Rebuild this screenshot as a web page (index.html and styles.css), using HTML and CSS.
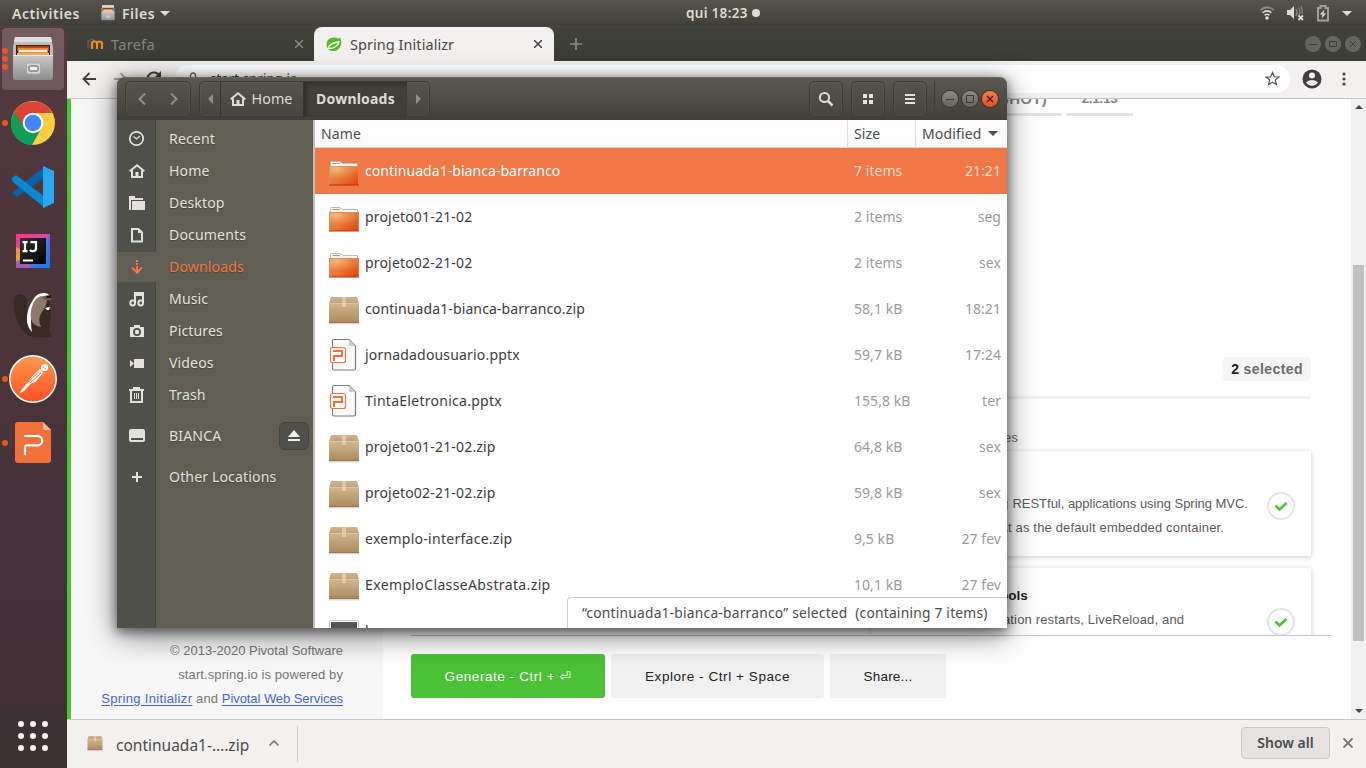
FILE: index.html
```html
<!DOCTYPE html>
<html lang="pt">
<head>
<meta charset="utf-8">
<title>Desktop</title>
<link rel="stylesheet" href="styles.css">
</head>
<body>
<svg class="defs" width="0" height="0">
  <defs>
    <linearGradient id="gFolder" x1="0" y1="0" x2="1" y2="1"><stop offset="0" stop-color="#e59a4e"/><stop offset=".5" stop-color="#e8793a"/><stop offset="1" stop-color="#e2400a"/></linearGradient>
    <radialGradient id="gGlow" cx=".25" cy=".2" r=".7"><stop offset="0" stop-color="#f8d095" stop-opacity=".7"/><stop offset="1" stop-color="#f0a060" stop-opacity="0"/></radialGradient>
    <linearGradient id="gBox" x1="0" y1="0" x2="0" y2="1"><stop offset="0" stop-color="#d2b58d"/><stop offset="1" stop-color="#a98a5e"/></linearGradient>
    <linearGradient id="gBoxTop" x1="0" y1="0" x2="0" y2="1"><stop offset="0" stop-color="#cfb48f"/><stop offset="1" stop-color="#c19f74"/></linearGradient>
    <linearGradient id="gMetal" x1="0" y1="0" x2="0" y2="1"><stop offset="0" stop-color="#c9c9c9"/><stop offset="1" stop-color="#8d8d8d"/></linearGradient>
    <linearGradient id="gPost" x1="0" y1="0" x2="0" y2="1"><stop offset="0" stop-color="#ff9a4d"/><stop offset="1" stop-color="#ff4f22"/></linearGradient>
    <linearGradient id="gIJ" x1="0" y1="0" x2="1" y2="1"><stop offset="0" stop-color="#ff318c"/><stop offset=".45" stop-color="#e0479a"/><stop offset=".55" stop-color="#5b6fe0"/><stop offset="1" stop-color="#087cfa"/></linearGradient>
    <linearGradient id="gBlk" x1="0" y1="0" x2="1" y2="1"><stop offset="0" stop-color="#333"/><stop offset="1" stop-color="#000"/></linearGradient>
    <symbol id="folder" viewBox="0 0 32 26">
      <path d="M2.500 7V1.500q0-1 1-1H12l2.500 2h15v4.500z" fill="#f6f6f6" stroke="#bcbcbc"/>
      <path d="M4.500 2.500h7.500" stroke="#ee8a58"/>
      <path d="M1 5h30v19H1z" fill="url(#gFolder)"/>
      <path d="M1 5h30v8Q16 17 1 20z" fill="url(#gGlow)"/>
      <path d="M1.500 24V5.500h29V24" fill="none" stroke="#d98d68" stroke-opacity=".7"/>
      <path d="M1 24h30" stroke="#b9300c"/>
    </symbol>
    <symbol id="box" viewBox="0 0 32 28">
      <path d="M1 26h30v1.500H1z" fill="#000" opacity=".12"/>
      <path d="M4 0h24q1 0 1.500 1.200L31 7H1l1.500-5.800Q3 0 4 0z" fill="url(#gBoxTop)"/>
      <path d="M1 6.500h30V25q0 1-1 1H2q-1 0-1-1z" fill="url(#gBox)"/>
      <path d="M1 6.500h30" stroke="#dcc6a5"/><path d="M1 25.600h30" stroke="#90714a" stroke-width=".8"/>
      <path d="M14 .5h4V10h-4z" fill="#e2cfb2" opacity=".8"/>
    </symbol>
    <symbol id="pptx" viewBox="0 0 28 34">
      <path d="M3.500 3q0-1.500 1.500-1.500h15L26.500 8v22.500q0 1.500-1.500 1.500H5q-1.500 0-1.500-1.500z" fill="#fbfbfb" stroke="#7d7d7d" stroke-width="1.200"/>
      <path d="M20 1.500V7q0 1 1 1h5.500z" fill="#ccc"/>
      <rect x="1.500" y="9.500" width="15" height="15" rx="2" fill="#fff" stroke="#f27441" stroke-width="1.200"/>
      <path d="M4 13h9v5H5v5" fill="none" stroke="#f0703c" stroke-width="2"/>
    </symbol>
    <symbol id="house" viewBox="0 0 16 16"><path d="M.7 8.300L8 2.300l7.300 6M3 7.500V14h10V7.500" fill="none" stroke="currentColor" stroke-width="2"/><path d="M6.500 9h3v5h-3z" fill="currentColor"/></symbol>
    <symbol id="cabinet" viewBox="0 0 44 46">
      <path d="M4 1h36l2 10v31H2V11z" fill="#bdbdbd"/><path d="M4 1h36l1 5H3z" fill="#dedede"/>
      <path d="M5 9h34v11H5z" fill="#352018"/><path d="M6 10h32v5H6z" fill="#b94612"/><path d="M7 12h30v6H7z" fill="#f58a3a"/><path d="M8 14h28v2H8z" fill="#fff3df"/><path d="M6 17h32v3H6z" fill="#e0b070"/>
      <path d="M2 19h40v23q0 2-2 2H4q-2 0-2-2z" fill="url(#gMetal)"/><path d="M2 19.500h40" stroke="#e6e6e6"/>
      <rect x="15.500" y="27" width="14" height="11" rx="2" fill="#d8d8d8" stroke="#a9a9a9"/><rect x="18" y="30" width="9" height="5" rx="1" fill="#eee" stroke="#555"/>
    </symbol>
  </defs>
</svg>

<header class="topbar">
  <span class="activities">Activities</span>
  <svg class="tb-files" width="14" height="16" viewBox="0 0 44 46" preserveAspectRatio="none"><use href="#cabinet"/></svg>
  <span class="appname">Files</span>
  <i class="tri-down tb-tri"></i>
  <div class="clock">qui 18:23 <i></i></div>
  <div class="tray">
    <svg width="14" height="14" viewBox="0 0 14 14" fill="none" stroke="#dfdbd2"><path d="M.5 4Q7-1.500 13.500 4" stroke="#8b8982" stroke-width="1.700"/><path d="M2.500 6.800Q7 3 11.500 6.800M4.600 9.300Q7 7.400 9.400 9.300" stroke-width="1.500"/><circle cx="7" cy="12" r="1.800" fill="#dfdbd2" stroke="none"/></svg>
    <svg width="17" height="16" viewBox="0 0 17 16"><path d="M0 5h3l4-4v13l-4-4H0z" fill="#dfdbd2"/><path d="M9 4q2 3.500 0 7M11.500 2.500q3 5 0 8M14 1q2 4 1 8" fill="none" stroke="#85837c" stroke-width="1.300"/><path d="M11.500 10.500l4.500 4.500m0-4.500L11.500 15" stroke="#dfdbd2" stroke-width="1.800"/></svg>
    <svg width="12" height="17" viewBox="0 0 12 17"><path d="M1 3h2.500V1h5v2H11v12.500H1z" fill="none" stroke="#a19f98" stroke-width="2"/><path d="M7.500 4.500L2.800 9.500h2.700l-1 4 4.700-5H6.500z" fill="#dfdbd2"/></svg>
    <i class="tri-down"></i>
  </div>
</header>

<div class="workspace">
  <nav class="dock">
    <div class="slot active"><div class="dots"><b></b><b></b><b></b></div><svg width="44" height="46"><use href="#cabinet"/></svg></div>
    <div class="slot"><div class="dots"><b></b></div>
      <svg width="46" height="46" viewBox="0 0 46 46"><circle cx="23" cy="23" r="22" fill="#ffcd40"/><path d="M4 12a22 22 0 0 0 18 33l9-16-8-6z" fill="#0f9d58"/><path d="M4 12A22 22 0 0 1 42.200 13H23l-8.500 15z" fill="#db4437"/><path d="M4 12l9 16 4 4 6 1-2 12A22 22 0 0 1 4 12z" fill="#0f9d58"/><circle cx="23" cy="23" r="10.200" fill="#fff"/><circle cx="23" cy="23" r="8.300" fill="#4285f4"/></svg></div>
    <div class="slot">
      <svg width="44" height="44" viewBox="0 0 44 44"><path d="M1 28l5 4L34 12V1z" fill="#0065a9"/><path d="M1 16v-3l4-3 29 22v11L2 17z" fill="#0788d0"/><path d="M32 1l11 5v32l-11 5V1z" fill="#29a8f0"/></svg></div>
    <div class="slot">
      <svg width="34" height="34" viewBox="0 0 34 34"><path d="M0 0h34v34H0z" fill="url(#gIJ)"/><path d="M0 13l4 2v15l-4-3z" fill="#f29a3a"/><path d="M0 27l6-1 8 4v4H0z" fill="#a45cb5"/><path d="M4 4h26v26H4z" fill="url(#gBlk)"/><path d="M6.500 8.200h5M9 8v9M6.500 17.200h5M14.500 8.200h5.500v6q0 3-3 3-2 0-3-1.400" fill="none" stroke="#fff" stroke-width="2.200"/><path d="M7 25.500h10v2H7z" fill="#fff"/></svg></div>
    <div class="slot">
      <svg width="40" height="48" viewBox="0 0 40 48"><path d="M1 9Q2 3 8 3q6 1 6 8-1 8 1 14l5-13q3-8 9-10 6-1 8 3 2 4-1 8 3 10 1 18l-.5 10q2 2 2 4.500-7 1.500-14 1Q11 46 5 31-1 18 1 9z" fill="#382923"/><path d="M20 9q4-8 12-7 3 0 5 3l-4 1-6 2q-6 5-8 13-2 9 0 20-6-6-5-16 1-9 6-16z" fill="#fff"/><path d="M20 13q3-7 8-8l6 4q-1 7-5 12-5 7-1 15-9-1-10-9-1-7 2-14z" fill="#8e7868"/><path d="M29 5.500q6-2 9 0v4q-5 0-9-2z" fill="#6e5a4e"/><path d="M33 5l5-1v3h-4z" fill="#1d1512"/><path d="M32 17l5-1-1 3h-2z" fill="#fff"/></svg></div>
    <div class="slot"><div class="dots"><b></b></div>
      <svg width="48" height="48" viewBox="0 0 48 48"><circle cx="24" cy="24" r="23.200" fill="url(#gPost)" stroke="#fff" stroke-width="1.500"/><circle cx="35.500" cy="12.500" r="3.600" fill="#fff"/><path d="M31 14l3.500 3.500-8 9.500-9 3 5-8z" fill="#fff"/><path d="M18.500 28L11 37.500l3-1L23 27z" fill="#fff" stroke="#fff"/><path d="M18 28.500l12-12M21 28l11-10M34 12l3 2" stroke="#ff7438" stroke-width="1"/></svg></div>
    <div class="slot"><div class="dots"><b></b></div>
      <svg width="36" height="42" viewBox="0 0 36 42"><path d="M3 0h25l8 8v30q0 3-3 3H3q-3 0-3-3V3q0-3 3-3z" fill="#f2713b"/><path d="M28 0v6q0 2 2 2h6z" fill="#f9b597"/><path d="M9 14h13.500a4.700 4.700 0 0 1 0 9.400H12q-2 0-2 2V33" fill="none" stroke="#fff" stroke-width="2.200"/></svg></div>
    <svg class="apps" width="32" height="32" viewBox="0 0 32 32" fill="#f2f1f0"><circle cx="4" cy="4" r="3"/><circle cx="16" cy="4" r="3"/><circle cx="28" cy="4" r="3"/><circle cx="4" cy="16" r="3"/><circle cx="16" cy="16" r="3"/><circle cx="28" cy="16" r="3"/><circle cx="4" cy="28" r="3"/><circle cx="16" cy="28" r="3"/><circle cx="28" cy="28" r="3"/></svg>
  </nav>

  <section class="browser">
    <div class="tabs">
      <div class="tab idle">
        <svg width="16" height="12" viewBox="0 0 16 12" fill="none"><path d="M0 4l5-3 2 2M1 5v5" stroke="#6a5a4a" stroke-width="1.500"/><path d="M5 11V5.500q0-2 2.500-2t2.500 2V11M10 5.500q0-2 2.500-2t2.500 2V11" stroke="#f28a13" stroke-width="2.200"/></svg>
        <span>Tarefa</span>
        <svg class="x" width="8" height="8" viewBox="0 0 8 8"><path d="M0 0l8 8M8 0L0 8" stroke="#8d8d88" stroke-width="1.400"/></svg>
      </div>
      <div class="tab current">
        <svg width="16" height="16" viewBox="0 0 16 16"><path d="M14 1q2 5 .5 9-2 5-7 5-6 0-7-6Q.500 2 7 1.500q4 0 5.500 1.200Q13.500 2 14 1z" fill="#55bd28"/><path d="M2 12q4 1 7-1 3.500-2 4-6M2.500 11Q5 7 12 6" stroke="#fff" stroke-width="1.300" fill="none"/></svg>
        <span>Spring Initializr</span>
        <svg class="x" width="8" height="8" viewBox="0 0 8 8"><path d="M0 0l8 8M8 0L0 8" stroke="#45433f" stroke-width="1.500"/></svg>
      </div>
      <svg class="plus" width="12" height="12" viewBox="0 0 12 12"><path d="M6 0v12M0 6h12" stroke="#8a8a84" stroke-width="1.700"/></svg>
      <div class="wctl dim"><i>
        <svg width="16" height="16"><path d="M4 8.500h8" stroke="#3c3d38"/></svg></i><i>
        <svg width="16" height="16"><path d="M4.500 5.500h7v5h-7z" fill="none" stroke="#3c3d38"/></svg></i><i>
        <svg width="16" height="16"><path d="M5 5l6 6m0-6l-6 6" stroke="#3c3d38"/></svg></i></div>
    </div>
    <div class="toolbar">
      <svg width="14" height="14" viewBox="0 0 14 14" fill="none" stroke="#403f3d" stroke-width="1.800"><path d="M14 7H1.500M7.500 1l-6 6 6 6"/></svg>
      <svg width="14" height="14" viewBox="0 0 14 14" fill="none" stroke="#aaa8a6" stroke-width="1.800"><path d="M0 7h12.500M6.500 1l6 6-6 6"/></svg>
      <svg width="16" height="16" viewBox="0 0 16 16" fill="none" stroke="#403f3d" stroke-width="2"><path d="M13.500 5A6.300 6.300 0 1 0 14 9"/><path d="M15 0v6.500H8.500z" fill="#403f3d" stroke="none"/></svg>
      <div class="url">
        <svg width="10" height="13" viewBox="0 0 10 13"><path d="M2.500 6V3.500a2.500 2.500 0 0 1 5 0V6" fill="none" stroke="#666" stroke-width="1.400"/><path d="M1 5.500h8v7H1z" fill="#666"/></svg>
        <span>start.spring.io</span>
        <svg class="star" width="15" height="15" viewBox="0 0 24 24"><path d="M12 2.500l2.800 6.700 7.200.6-5.500 4.700 1.700 7-6.200-3.700-6.200 3.700 1.700-7L2 9.800l7.200-.6z" fill="none" stroke="#555" stroke-width="2"/></svg>
      </div>
      <svg class="user" width="20" height="20" viewBox="0 0 20 20"><circle cx="10" cy="10" r="9.500" fill="#403f3f"/><circle cx="10" cy="6.500" r="3" fill="#f2f1f0"/><path d="M4 13.500q2-2.500 6-2.500t6 2.500q-2.500 3.300-6 3.300t-6-3.300z" fill="#f2f1f0"/></svg>
      <svg class="kebab" width="4" height="14" viewBox="0 0 4 14" fill="#444"><circle cx="2" cy="2" r="1.600"/><circle cx="2" cy="7" r="1.600"/><circle cx="2" cy="12" r="1.600"/></svg>
    </div>

    <div class="page">
      <aside class="left">
        <p>© 2013-2020 Pivotal Software<br><span class="pw">start.spring.io is powered by</span><br><span class="lk"><a class="l1">Spring Initializr</a> and <a class="l2">Pivotal Web Services</a></span></p>
      </aside>
      <main class="main">
        <div class="scrollarea">
          <div class="versions"><span class="v1">2.1.14 (SNAPSHOT)</span><span class="v2">2.1.13</span></div>
          <div class="selhead"><span class="pill"><b>2</b> selected</span></div>
          <div class="results">
            <div class="label">Selected dependencies</div>
            <article class="dep one"><div><p class="a"><span class="lead">Build web, including </span>RESTful, applications using Spring MVC.</p><p>Uses Apache Tomcat as the default embedded container.</p></div>
              <svg width="28" height="28" viewBox="0 0 28 28"><circle cx="14" cy="14" r="13" fill="#fff" stroke="#e5e5e5" stroke-width="2"/><path d="M8.500 13.500l4 4 7-6.500" fill="none" stroke="#4cc22f" stroke-width="2.600"/></svg></article>
            <article class="dep two"><div><h4>Spring Boot DevTools</h4><p>Provides fast application restarts, LiveReload, and</p></div>
              <svg width="28" height="28" viewBox="0 0 28 28"><circle cx="14" cy="14" r="13" fill="#fff" stroke="#e5e5e5" stroke-width="2"/><path d="M8.500 13.500l4 4 7-6.500" fill="none" stroke="#4cc22f" stroke-width="2.600"/></svg></article>
          </div>
        </div>
        <div class="actions"><button class="go">Generate - Ctrl + <span class="ret">⏎</span></button><button class="ex">Explore - Ctrl + Space</button><button class="sh">Share...</button></div>
      </main>
      <div class="scroll"><i class="up"></i><i class="thumb"></i><i class="down"></i></div>
    </div>

    <footer class="downloads">
      <svg width="16" height="15" viewBox="0 0 32 28" preserveAspectRatio="none"><use href="#box"/></svg>
      <span class="fname">continuada1-….zip</span>
      <svg class="chev" width="10" height="6" viewBox="0 0 10 6"><path d="M.5 5.500L5 1l4.500 4.500" fill="none" stroke="#777" stroke-width="1.600"/></svg>
      <i class="sep"></i>
      <button class="showall">Show all</button>
      <svg class="close" width="10" height="10" viewBox="0 0 10 10"><path d="M.5.5l9 9m0-9l-9 9" stroke="#737373" stroke-width="1.900"/></svg>
    </footer>
  </section>
</div>

<section class="files">
  <header class="fhead">
    <div class="nav"><svg width="8" height="12" viewBox="0 0 8 12"><path d="M7 .5L1.500 6 7 11.500"/></svg><svg width="8" height="12" viewBox="0 0 8 12"><path d="M1 .5L6.500 6 1 11.500"/></svg></div>
    <div class="path"><span class="pl"><i class="tl"></i></span><span class="ph"><svg width="16" height="16"><use href="#house"/></svg>Home</span><span class="pd">Downloads</span><span class="pr"><i class="tr"></i></span></div>
    <div class="fbtns">
      <span><svg width="16" height="16" viewBox="0 0 16 16"><circle cx="6.500" cy="6.500" r="4.600" fill="none" stroke="#dfdbd2" stroke-width="2"/><path d="M10 10l4.500 4.500" stroke="#dfdbd2" stroke-width="2.500"/></svg></span>
      <span><svg width="10" height="10" viewBox="0 0 10 10" fill="#e6e2d9"><path d="M0 0h4v4H0zM6 0h4v4H6zM0 6h4v4H0zM6 6h4v4H6z"/></svg></span>
      <span><svg width="10" height="10" viewBox="0 0 10 10" fill="#e6e2d9"><path d="M0 0h10v2H0zM0 4h10v2H0zM0 8h10v2H0z"/></svg></span>
    </div>
    <div class="wctl"><i><svg width="16" height="16"><path d="M4 8.500h8" stroke="#3a3934"/></svg></i><i><svg width="16" height="16"><path d="M4.500 4.500h7v7h-7z" fill="none" stroke="#3a3934"/></svg></i><i class="red"><svg width="16" height="16"><path d="M5 5l6 6m0-6l-6 6" stroke="#46180a" stroke-width="1.300"/></svg></i></div>
  </header>
  <div class="fbody">
    <ul class="side">
      <li><svg viewBox="0 0 16 16" width="16" height="16"><circle cx="7.500" cy="7.500" r="6.700" fill="none" stroke="currentColor" stroke-width="1.700"/><path d="M4.500 5.500l3 2.500L11 5" fill="none" stroke="currentColor" stroke-width="1.300"/></svg><span>Recent</span></li>
      <li><svg width="16" height="16"><use href="#house"/></svg><span>Home</span></li>
      <li><svg viewBox="0 0 16 16" width="16" height="16" fill="currentColor"><path d="M0 1h6v2h8v2H2v10H0z"/><path d="M3 6h13v9H3z"/></svg><span>Desktop</span></li>
      <li><svg viewBox="0 0 16 16" width="16" height="16"><path d="M3 2h6.500L13 5.500V14.500H3z" fill="none" stroke="currentColor" stroke-width="2"/><path d="M9 2v4h4" fill="currentColor"/></svg><span>Documents</span></li>
      <li class="cur"><svg viewBox="0 0 16 16" width="16" height="16"><path d="M7 1h2v2H7zM7 4h2v2H7zM7 7h2v5H7z" fill="currentColor"/><path d="M3 8.500l5 5 5-5" fill="none" stroke="currentColor" stroke-width="2"/></svg><span>Downloads</span></li>
      <li><svg viewBox="0 0 16 16" width="16" height="16" fill="none" stroke="currentColor" stroke-width="2"><path d="M6 12V2h8v10M6 4h8"/><circle cx="3.700" cy="12" r="2.400"/><circle cx="11.700" cy="12" r="2.400"/></svg><span>Music</span></li>
      <li><svg viewBox="0 0 16 16" width="16" height="16"><path fill-rule="evenodd" fill="currentColor" d="M5 2h6v2h4v10H1V4h4zM8 5a4 4 0 1 0 0 8 4 4 0 0 0 0-8z"/><circle cx="8" cy="9" r="2.200" fill="currentColor"/></svg><span>Pictures</span></li>
      <li><svg viewBox="0 0 16 16" width="16" height="16" fill="currentColor"><path d="M5 4h10v9H5zM1 5l4 3.500L1 12z"/></svg><span>Videos</span></li>
      <li><svg viewBox="0 0 16 16" width="16" height="16" fill="none" stroke="currentColor" stroke-width="2"><path d="M0 3h15M2 4v11h11V4"/><path d="M4 1h7"/><path d="M5.500 6v6M7.500 6v6M9.500 6v6" stroke-width="1"/></svg><span>Trash</span></li>
      <li class="gap"><svg viewBox="0 0 16 16" width="16" height="16"><path fill-rule="evenodd" fill="currentColor" d="M2 1h12q2 0 2 2v9q0 2-2 2H2q-2 0-2-2V3q0-2 2-2zM2 10v2h12v-2z"/></svg><span>BIANCA</span><em class="eject"><svg width="12" height="12" viewBox="0 0 12 12" fill="#eee"><path d="M6 0l6 7H0zM0 9h12v2H0z"/></svg></em></li>
      <li class="gap"><svg viewBox="0 0 16 16" width="16" height="16"><path d="M8 3v10M3 8h10" stroke="currentColor" stroke-width="2"/></svg><span>Other Locations</span></li>
    </ul>
    <div class="list">
      <div class="cols"><span>Name</span><span>Size</span><span>Modified <i class="tri-down"></i></span></div>
      <div class="row sel"><svg width="32" height="26"><use href="#folder"/></svg><span>continuada1-bianca-barranco</span><span>7 items</span><span>21:21</span></div>
      <div class="row"><svg width="32" height="26"><use href="#folder"/></svg><span class="w1">projeto01-21-02</span><span>2 items</span><span>seg</span></div>
      <div class="row"><svg width="32" height="26"><use href="#folder"/></svg><span class="w1">projeto02-21-02</span><span>2 items</span><span>sex</span></div>
      <div class="row"><svg width="32" height="28"><use href="#box"/></svg><span class="w0">continuada1-bianca-barranco.zip</span><span>58,1 kB</span><span>18:21</span></div>
      <div class="row p"><svg width="28" height="34"><use href="#pptx"/></svg><span class="w1">jornadadousuario.pptx</span><span>59,7 kB</span><span>17:24</span></div>
      <div class="row p"><svg width="28" height="34"><use href="#pptx"/></svg><span class="w2">TintaEletronica.pptx</span><span>155,8 kB</span><span>ter</span></div>
      <div class="row"><svg width="32" height="28"><use href="#box"/></svg><span class="w1">projeto01-21-02.zip</span><span>64,8 kB</span><span>sex</span></div>
      <div class="row"><svg width="32" height="28"><use href="#box"/></svg><span class="w1">projeto02-21-02.zip</span><span>59,8 kB</span><span>sex</span></div>
      <div class="row"><svg width="32" height="28"><use href="#box"/></svg><span class="w2">exemplo-interface.zip</span><span>9,5 kB</span><span>27 fev</span></div>
      <div class="row"><svg width="32" height="28"><use href="#box"/></svg><span class="w3">ExemploClasseAbstrata.zip</span><span>10,1 kB</span><span>27 fev</span></div>
      <div class="row last"><svg width="32" height="24" viewBox="0 0 32 24"><path d="M1.500.5h29v23h-29z" fill="#fff" stroke="#ccc"/><path d="M3 2h26v21H3z" fill="#555"/></svg><span>h</span></div>
      <div class="status">“continuada1-bianca-barranco” selected&nbsp; (containing 7 items)</div>
    </div>
  </div>
</section>
</body>
</html>
```
FILE: styles.css
```css
* { box-sizing: border-box; }
body { margin: 0; width: 1366px; height: 768px; overflow: hidden; position: relative; display: flex; flex-direction: column; font: 14px "Noto Sans", sans-serif; letter-spacing: .05px; }
.defs { position: absolute; }
svg { display: block; flex: none; }
ul, p, h4 { margin: 0; padding: 0; list-style: none; }
button { border: 0; margin: 0; padding: 0; }
.tri-down { border: 5px solid transparent; border-top-color: #dfdbd2; border-bottom: 0; display: block; }

.topbar { height: 27px; flex: none; display: flex; align-items: center; position: relative; background: linear-gradient(#57544b, #403f3a); color: #dfdbd2; font-weight: 600; font-size: 14px; border-bottom: 1px solid #494740; }
.activities { width: 89px; padding-left: 12px; letter-spacing: .55px; }
.tb-files { margin-left: 12px; }
.appname { margin-left: 7px; width: 33px; letter-spacing: .5px; }
.tb-tri { margin-left: 5px; }
.clock { position: absolute; left: 686px; font-size: 13.5px; display: flex; align-items: center; gap: 4px; white-space: nowrap; letter-spacing: .3px; }
.clock i { width: 8px; height: 8px; border-radius: 50%; background: #dfdbd2; }
.tray { margin-left: auto; padding-right: 14px; display: flex; align-items: center; gap: 13px; }

.workspace { display: flex; flex: 1; min-height: 0; }
.dock { width: 67px; background: linear-gradient(#533a3f, #4b353a 35%, #44313a 75%, #3c3133); display: flex; flex-direction: column; position: relative; flex: none; }
.slot { height: 64px; display: flex; align-items: center; justify-content: center; position: relative; flex: none; padding-right: 1px; }
.slot.active { background: linear-gradient(#745b5f, #6e565b); height: 62px; margin: 1px 3px 1px 2px; border-radius: 4px; padding-right: 0; }
.dots { position: absolute; left: 2px; top: 0; bottom: 0; display: flex; flex-direction: column; justify-content: center; gap: 2px; }
.active .dots { left: 0; }
.dots b { width: 6px; height: 6px; border-radius: 50%; background: #e95420; }
.apps { margin: auto 0 16px 17px; }

.browser { flex: 1; display: flex; flex-direction: column; min-width: 0; }
.tabs { height: 34px; background: linear-gradient(#41423c, #3b3c36); display: flex; align-items: center; }
.tab { display: flex; align-items: center; height: 34px; }
.tab span { font-size: 14.5px; margin-top: -1px; }
.idle { width: 247px; padding: 0 11px 0 20px; color: #84837f; gap: 8px; }
.idle span { letter-spacing: .3px; }
.current { width: 240px; background: #f2f1f0; border-radius: 8px 8px 0 0; padding: 0 12px; gap: 8px; color: #4a4845; }
.tab .x { margin-left: auto; }
.plus { margin-left: 16px; }
.wctl { display: flex; gap: 4px; }
.wctl i { width: 16px; height: 16px; border-radius: 50%; background: linear-gradient(#8b8a83, #64635d); box-shadow: 0 0 0 1px #33322e; }
.wctl .red { background: linear-gradient(#f37c55, #e8501f); }
.wctl.dim { margin-left: auto; padding-right: 5px; }
.dim i { background: #65665d; box-shadow: none; }
.toolbar { height: 38px; flex: none; background: #f2f1f0; border-bottom: 1px solid #c9c7c5; display: flex; align-items: center; padding: 0 20px 2px 15px; }
.toolbar > svg:nth-child(-n+3) { margin-right: 18px; }
.url { height: 28px; flex: 1; background: #fff; border-radius: 14px; display: flex; align-items: center; margin-left: -5px; padding: 0 10px 0 13px; color: #3c3c3c; }
.url span { margin-left: 12px; font-size: 13.5px; letter-spacing: -.05px; }
.star { margin-left: auto; }
.user { margin-left: 12px; }
.kebab { margin-left: 20px; }

.page { height: 620px; flex: none; display: flex; font-family: "Liberation Sans", sans-serif; font-size: 13px; background: #fff; letter-spacing: 0; }
.left { width: 316px; border-left: 4px solid #4bc236; background: #f7f7f7; display: flex; flex-direction: column; justify-content: flex-end; align-items: flex-end; padding: 0 40px 8px 0; line-height: 24px; color: #757575; text-align: right; white-space: nowrap; }
.pw { letter-spacing: .1px; }
.lk { letter-spacing: .1px; }
.left a { color: #3f66e8; text-decoration: underline; text-underline-offset: 2px; }
.left .l1 { letter-spacing: .35px; }
.left .l2 { letter-spacing: -.07px; }
.main { flex: 1; display: flex; flex-direction: column; padding: 0 20px 0 28px; }
.scrollarea { height: 537px; overflow: hidden; border-bottom: 1px solid #c6c6c6; padding-right: 20px; flex: none; }
.versions { display: flex; gap: 4px; height: 17px; justify-content: flex-end; padding-right: 178px; align-items: flex-end; font-size: 15px; letter-spacing: .3px; font-weight: bold; color: #858585; }
.versions span { height: 29px; border-bottom: 3px solid #e4e4e4; text-align: center; line-height: 23px; padding: 0 15px; white-space: nowrap; }
.versions .v2 { width: 67px; padding: 0; font-size: 13.5px; letter-spacing: -.3px; }
.selhead { margin-top: 241px; height: 42px; border-bottom: 3px solid #f1f1f1; display: flex; justify-content: flex-end; align-items: flex-start; }
.pill { height: 24px; width: 88px; background: #f6f6f6; border-radius: 4px; line-height: 24px; text-align: center; font-weight: bold; font-size: 14px; color: #6b6b6b; letter-spacing: .4px; }
.pill b { color: #222; }
.results { margin-left: 460px; padding-top: 26px; }
.label { height: 26px; line-height: 26px; font-size: 13.5px; color: #6c6c6c; width: 148px; margin-left: -1px; text-align: right; white-space: nowrap; }
.dep { height: 105px; background: #fff; box-shadow: 0 1px 5px rgba(0,0,0,.2); margin-bottom: 12px; display: flex; justify-content: space-between; align-items: center; padding: 4px 16px 0; line-height: 24px; color: #5b5b5b; white-space: nowrap; letter-spacing: .16px; }
.dep .a { letter-spacing: -.02px; }
.dep .lead { letter-spacing: .33px; }
.dep.one > div { padding-top: 20px; }
.dep.two { padding-top: 2px; }
.dep.two > div { padding-bottom: 28px; }
.dep h4 { color: #222; font-size: 13.5px; letter-spacing: 0; }
.actions { display: flex; gap: 6px; padding-top: 18px; }
.actions button { height: 44px; border-radius: 3px; background: #f0f0f0; color: #222; font: 13.5px "Liberation Sans", sans-serif; letter-spacing: .57px; white-space: nowrap; }
.actions .go { width: 194px; background: #4bc236; color: #fff; }
.ret { font-family: "DejaVu Sans", sans-serif; }
.ex { width: 213px; }
.actions .sh { width: 116px; letter-spacing: .2px; }
.scroll { width: 15px; background: #f1f1f1; display: flex; flex-direction: column; align-items: center; }
.up { border: 4px solid transparent; border-bottom-color: #444; border-top: 0; margin-top: 6px; }
.thumb { width: 11px; height: 376px; margin-top: 156px; background: #c1c1c1; }
.down { border: 4px solid transparent; border-top-color: #444; border-bottom: 0; margin-top: auto; margin-bottom: 6px; }

.downloads { flex: 1; background: #f2f1f0; border-top: 1px solid #c9c7c5; display: flex; align-items: center; padding: 0 13px 2px 20px; color: #4c4a47; }
.fname { font-size: 15.5px; letter-spacing: 0; margin-left: 13px; width: 133px; white-space: nowrap; padding-top: 4px; }
.chev { margin-left: 20px; }
.sep { width: 1px; height: 36px; background: #cfcdcb; margin-left: 18px; margin-top: 2px; }
.showall { margin-left: auto; width: 89px; height: 32px; border: 1px solid #cbc9c7; border-radius: 4px; background: #e5e3e1; font: 600 14px "Noto Sans", sans-serif; color: #4c4a47; padding-bottom: 2px; }
.close { margin-left: 13px; }

.files { position: absolute; left: 117px; top: 77px; width: 890px; height: 551px; border-radius: 7px 7px 0 0; box-shadow: 0 7px 30px rgba(0,0,0,.5), 0 3px 11px 1px rgba(0,0,0,.45); display: flex; flex-direction: column; }
.fhead { height: 43px; flex: none; border-radius: 7px 7px 0 0; background: linear-gradient(#5b584f, #403f3a); border-top: 1px solid #69665c; display: flex; align-items: center; padding: 0 9px 1px 8px; color: #dfdbd2; }
.nav, .path, .fbtns span { height: 36px; border: 1px solid #3c3b36; border-radius: 5px; box-shadow: inset 0 0 0 1px rgba(255,255,255,.04); background: linear-gradient(#56534b, #46443f); display: flex; align-items: center; }
.nav { width: 66px; justify-content: space-between; padding: 0 12px; }
.nav svg { fill: none; stroke: #918e85; stroke-width: 2; }
.path { margin-left: 8px; width: 231px; }
.path span { display: flex; align-items: center; justify-content: center; height: 34px; }
.pl { width: 21px; border-right: 1px solid #34332f; }
.tl { border: 5px solid transparent; border-right-color: #918e85; border-left: 0; }
.tr { border: 5px solid transparent; border-left-color: #918e85; border-right: 0; }
.ph { width: 83px; gap: 6px; padding-right: 2px; font-size: 14.3px; border-right: 1px solid #34332f; }
.path .pd { width: 103px; background: #403f3a; font-weight: bold; letter-spacing: .2px; box-shadow: inset 2px 2px 4px rgba(0,0,0,.3); }
.pr { width: 22px; }
.fbtns { margin-left: auto; display: flex; gap: 8px; border-right: 1px solid #3e3d38; padding-right: 7px; }
.fbtns span { width: 34px; justify-content: center; }
.files .fhead .wctl { margin-left: 7px; gap: 4px; }
.fbody { flex: 1; display: flex; min-height: 0; }
.side { width: 198px; flex: none; border-right: 2px solid #c4bfba; padding-top: 3px; color: #e3e1dd; background: linear-gradient(90deg, #50504a 38px, #46463f 38px, #46463f 39px, #605e52 39px); }
.side li { height: 32px; display: flex; align-items: center; padding-left: 12px; }
.side span { margin-left: 24px; padding-bottom: 2px; font-size: 14.1px; letter-spacing: .12px; text-shadow: 0 1px 1px rgba(0,0,0,.25); }
.side .cur { color: #f07746; height: 30px; margin: 1px 0; background: #605e52; }
.side .gap { margin-top: 9px; }
.eject { margin-left: auto; margin-right: 4px; width: 30px; height: 28px; border: 1px solid #45453f; border-radius: 6px; background: #50504a; display: flex; align-items: center; justify-content: center; }
.list { flex: 1; background: #fff; overflow: hidden; position: relative; }
.cols { height: 28px; border-bottom: 1px solid #d9d7d5; background: linear-gradient(#fff, #fafafa); display: grid; grid-template-columns: 533px 68px 91px; line-height: 27px; color: #4c4c4c; }
.cols span { padding-left: 6px; border-right: 1px solid #e0dedc; display: flex; align-items: center; gap: 6px; white-space: nowrap; letter-spacing: .15px; }
.cols span:last-child { border: 0; }
.cols .tri-down { border-top-color: #4c4c4c; }
.row { height: 46px; display: grid; grid-template-columns: 37px 489px 60px 1fr; align-items: center; padding: 0 6px 0 13px; color: #3c3c3c; white-space: nowrap; }
.row span { padding-bottom: 2px; }
.row .w0 { letter-spacing: .11px; }
.row .w1 { letter-spacing: .18px; }
.row .w2 { letter-spacing: .27px; }
.row .w3 { letter-spacing: .37px; }
.row span:nth-child(n+3) { color: #9b9a98; }
.row span:last-child { text-align: right; }
.row svg { margin-top: 5px; }
.row svg[height="28"] { margin-top: 4px; }
.row.p svg { margin: 0 0 0 1px; }
.row.sel { background: #f07746; }
.row.sel span { color: #fff; }
.row.sel span:nth-child(n+3) { color: #fbd9cb; }
.row.last { align-items: start; }
.row.last svg { margin-top: 12px; }
.row.last span { padding-top: 13px; text-align: left; }
.status { position: absolute; right: 0; bottom: 0; width: 440px; height: 31px; border: 1px solid #cfcdcb; border-width: 1px 0 0 1px; border-radius: 4px 0 0 0; background: #fff; color: #4c4c4c; line-height: 29px; padding-left: 14px; white-space: nowrap; font-size: 13.8px; letter-spacing: .22px; }
```
